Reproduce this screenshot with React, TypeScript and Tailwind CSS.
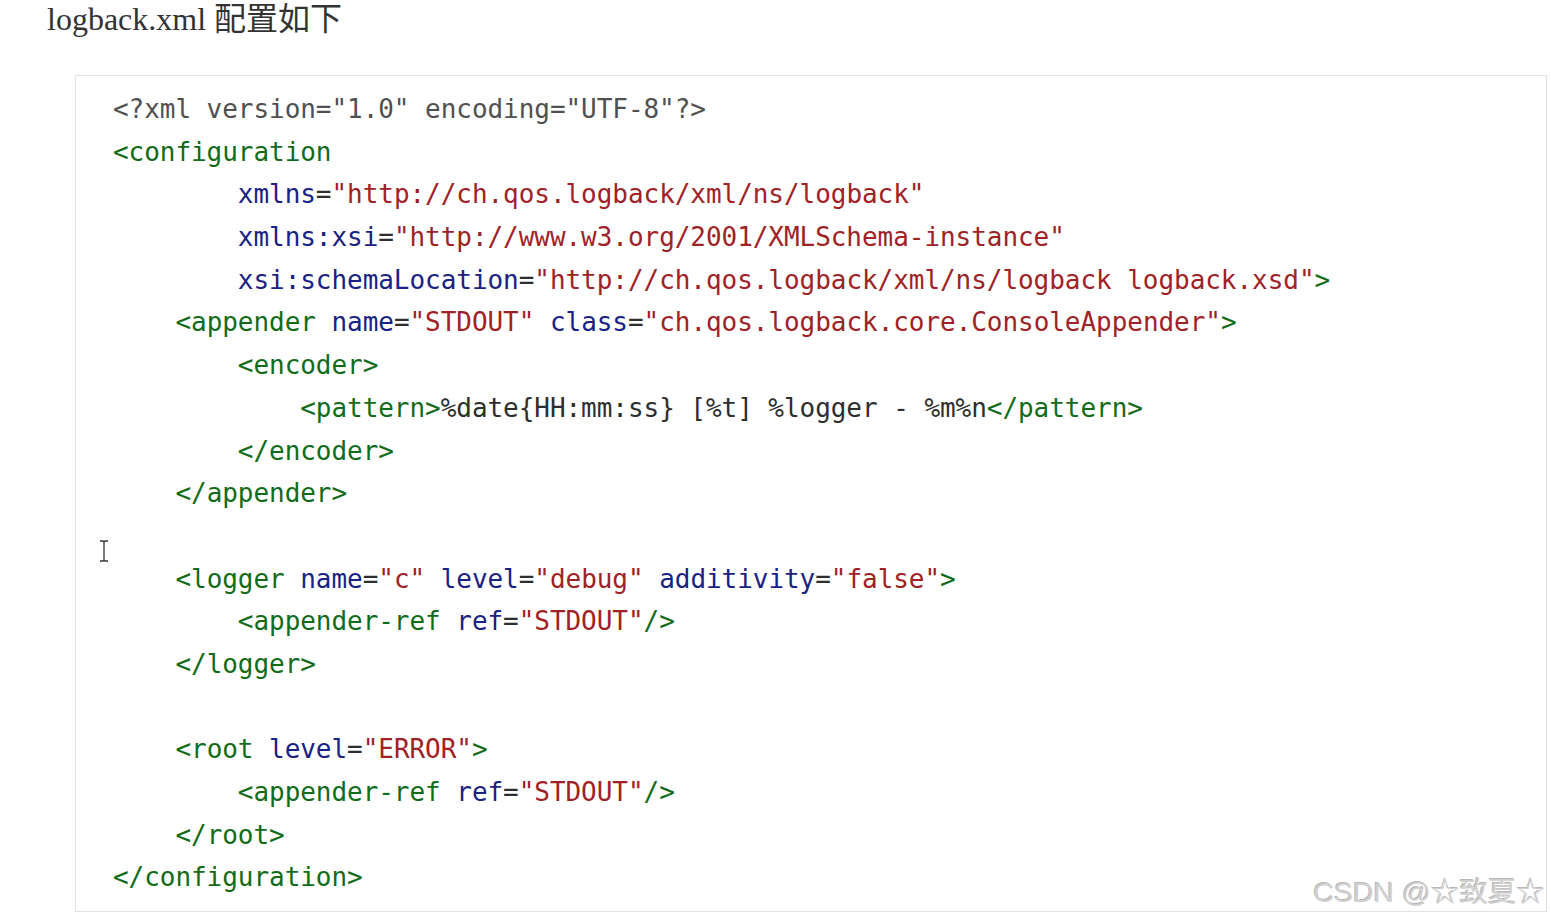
import React from 'react';

type Tok = [string, string];

const C: Record<string, string> = {
	m: 'text-[#505050]',
	t: 'text-[#126b18]',
	a: 'text-[#1a2283]',
	s: 'text-[#9e2226]',
	p: 'text-[#2e2e2e]',
};

const lines: Tok[][] = [
	[['m', '<?xml version="1.0" encoding="UTF-8"?>']],
	[['t', '<configuration']],
	[['p', '        '], ['a', 'xmlns'], ['p', '='], ['s', '"http://ch.qos.logback/xml/ns/logback"']],
	[['p', '        '], ['a', 'xmlns:xsi'], ['p', '='], ['s', '"http://www.w3.org/2001/XMLSchema-instance"']],
	[
		['p', '        '],
		['a', 'xsi:schemaLocation'],
		['p', '='],
		['s', '"http://ch.qos.logback/xml/ns/logback logback.xsd"'],
		['t', '>'],
	],
	[
		['p', '    '],
		['t', '<appender '],
		['a', 'name'],
		['p', '='],
		['s', '"STDOUT"'],
		['p', ' '],
		['a', 'class'],
		['p', '='],
		['s', '"ch.qos.logback.core.ConsoleAppender"'],
		['t', '>'],
	],
	[['p', '        '], ['t', '<encoder>']],
	[
		['p', '            '],
		['t', '<pattern>'],
		['p', '%date{HH:mm:ss} [%t] %logger - %m%n'],
		['t', '</pattern>'],
	],
	[['p', '        '], ['t', '</encoder>']],
	[['p', '    '], ['t', '</appender>']],
	[],
	[
		['p', '    '],
		['t', '<logger '],
		['a', 'name'],
		['p', '='],
		['s', '"c"'],
		['p', ' '],
		['a', 'level'],
		['p', '='],
		['s', '"debug"'],
		['p', ' '],
		['a', 'additivity'],
		['p', '='],
		['s', '"false"'],
		['t', '>'],
	],
	[['p', '        '], ['t', '<appender-ref '], ['a', 'ref'], ['p', '='], ['s', '"STDOUT"'], ['t', '/>']],
	[['p', '    '], ['t', '</logger>']],
	[],
	[['p', '    '], ['t', '<root '], ['a', 'level'], ['p', '='], ['s', '"ERROR"'], ['t', '>']],
	[['p', '        '], ['t', '<appender-ref '], ['a', 'ref'], ['p', '='], ['s', '"STDOUT"'], ['t', '/>']],
	[['p', '    '], ['t', '</root>']],
	[['t', '</configuration>']],
];

const App = () => {
	return (
		<div className="relative w-full h-[920px] bg-white overflow-hidden">
			<h1 className="pl-[47px] pt-[1px] text-[32px] leading-[36px] text-[#333333] font-['Liberation_Serif','Noto_Sans_CJK_SC',serif]">
				logback.xml 配置如下
			</h1>
			<div className="relative ml-[75px] mt-[38px] w-[1472px] h-[837px] border border-[#e2e2e2] pt-[12px] pl-[37px]">
				<pre className="font-['DejaVu_Sans_Mono',monospace] text-[26px] leading-[42.7px] tracking-[-0.05px]">
					{lines.map((line, i) => (
						<div key={i} className="h-[42.7px]">
							{line.map(([k, s], j) => (
								<span key={j} className={C[k]}>
									{s}
								</span>
							))}
						</div>
					))}
				</pre>
				<svg
					className="absolute left-[23px] top-[464px]"
					width="10"
					height="22"
					viewBox="0 0 10 22"
					fill="none"
					stroke="#333"
					strokeWidth="1.3"
				>
					<path d="M1 1h3l1 1 1-1h3M5 2v18M1 21h3l1-1 1 1h3" />
				</svg>
				<div className="absolute right-[1px] bottom-[1px] text-[28.5px] leading-[36px] text-[#cfcfcf] [text-shadow:1px_1px_0_#ffffff,-1px_-1px_0_#b8b8b8] font-['Liberation_Sans','Noto_Sans_CJK_SC',sans-serif]">
					CSDN @☆致夏☆
				</div>
			</div>
		</div>
	);
};

export default App;
